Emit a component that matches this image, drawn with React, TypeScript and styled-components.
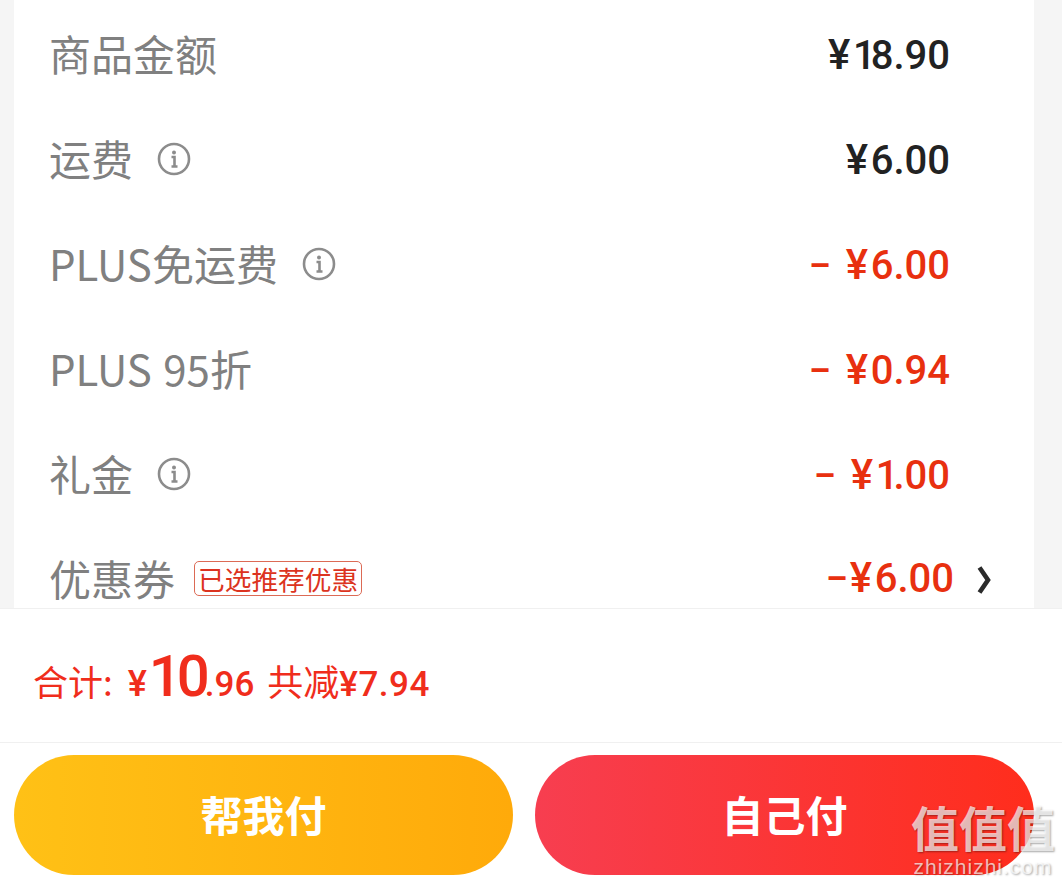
import React from "react";
import styled, { createGlobalStyle } from "styled-components";

const GlobalStyle = createGlobalStyle`
  html, body {
    margin: 0;
    padding: 0;
    background: #ffffff;
    overflow: hidden;
  }
  body {
    font-family: "Roboto", "Noto Sans CJK SC", sans-serif;
  }
`;

const Page = styled.div`
  position: relative;
  width: 1062px;
  height: 881px;
  overflow: hidden;
  background: #ffffff;
`;

const Backdrop = styled.div`
  height: 608px;
  padding: 0 28px 0 14px;
  background: #f5f5f5;
  border-bottom: 1px solid #f0f0f0;
  overflow: hidden;
`;

const Card = styled.div`
  height: 608px;
  background: #ffffff;
  padding: 4px 84px 0 35px;
`;

const Row = styled.div`
  display: flex;
  align-items: center;
  justify-content: space-between;
  height: 105px;
`;

const Label = styled.div`
  display: flex;
  align-items: center;
  margin-top: -8px;
  font-family: "Noto Sans CJK SC", sans-serif;
  font-size: 42px;
  line-height: 50px;
  word-spacing: 2px;
  color: #808080;
  white-space: nowrap;
`;

const InfoIcon = styled.svg`
  width: 34px;
  height: 34px;
  margin-left: 24px;
  margin-top: 2px;
`;

const Amount = styled.div<{ $discount?: boolean }>`
  display: flex;
  align-items: baseline;
  margin-top: -2px;
  font-family: "Roboto", sans-serif;
  font-weight: 500;
  font-size: 40px;
  line-height: 50px;
  white-space: pre;
  color: ${(p) => (p.$discount ? "#e8300f" : "#222222")};
`;

const Minus = styled.span<{ $tight?: boolean }>`
  margin-right: ${(p) => (p.$tight ? "0" : "13px")};
  transform: scaleX(0.85);
`;

const Yen = styled.span`
  width: 25px;
  font-size: 42px;
`;

const NarrowOne = styled.span`
  letter-spacing: -5px;
`;

const CouponTag = styled.span`
  display: inline-block;
  margin-left: 19px;
  margin-top: 2px;
  padding: 0 3px;
  height: 33px;
  border: 1px solid #dc6a55;
  border-radius: 5px;
  font-size: 26.7px;
  line-height: 33px;
  color: #dc3320;
`;

const CouponSide = styled.div`
  display: flex;
  align-items: center;
  margin-top: -4px;
  margin-right: -42px;
`;

const Chevron = styled.svg`
  width: 16px;
  height: 30px;
  margin-left: 22px;
`;

const Summary = styled.div`
  display: flex;
  align-items: baseline;
  height: 134px;
  box-sizing: border-box;
  padding: 37px 0 0 33px;
  border-bottom: 1px solid #f0f0f0;
  color: #f02d1c;
  white-space: pre;
`;

const SummaryLabel = styled.span`
  font-family: "Noto Sans CJK SC", sans-serif;
  font-size: 35px;
`;

const SummaryYen = styled.span`
  font-weight: 500;
  font-size: 36px;
  margin-left: 15px;
`;

const Big = styled.span`
  font-weight: 500;
  font-size: 58px;
  line-height: 60px;
  letter-spacing: -5px;
  margin-left: 2px;
`;

const Cents = styled.span`
  font-weight: 500;
  font-size: 35px;
`;

const Saved = styled.span`
  font-family: "Noto Sans CJK SC", sans-serif;
  font-size: 36px;
  margin-left: 13px;
`;

const SavedValue = styled.span`
  font-family: "Roboto", sans-serif;
  font-weight: 500;
  font-size: 35px;
  letter-spacing: 0.5px;
`;

const Buttons = styled.div`
  display: flex;
  gap: 22px;
  padding: 12px 28px 0 14px;
`;

const PayButton = styled.button<{ $kind: "friend" | "self" }>`
  flex: 1;
  height: 120px;
  padding: 0 0 4px;
  border: 0;
  border-radius: 60px;
  font-family: "Noto Sans CJK SC", sans-serif;
  font-weight: 700;
  font-size: 42px;
  color: #ffffff;
  background: ${(p) =>
    p.$kind === "friend"
      ? "linear-gradient(90deg, #ffc116, #ffaa0a)"
      : "linear-gradient(90deg, #f73e50, #ff2d1c)"};
`;

const Watermark = styled.div`
  position: absolute;
  right: 7px;
  bottom: 2px;
  width: 144px;
  text-align: center;
  color: rgba(255, 255, 255, 0.7);
  text-shadow: 1px 1px 2px rgba(0, 0, 0, 0.35);
`;

const MarkGlyphs = styled.div`
  font-family: "Noto Sans CJK SC", sans-serif;
  font-weight: 700;
  font-size: 48px;
  line-height: 58px;
  white-space: nowrap;
`;

const MarkSite = styled.div`
  font-family: "Liberation Sans", sans-serif;
  font-size: 21px;
  line-height: 24px;
  letter-spacing: 1px;
  white-space: nowrap;
`;

const Info = () => (
  <InfoIcon viewBox="0 0 34 34" fill="none">
    <circle cx="17" cy="17" r="15" stroke="#8c8c8c" strokeWidth="2.6" />
    <circle cx="17" cy="10.5" r="2" fill="#8c8c8c" />
    <path d="M14.5 15h3v9M14.5 24.5h6" stroke="#8c8c8c" strokeWidth="2.6" />
  </InfoIcon>
);

// the "1" in the reference's numerals is narrower than Roboto's tabular one
const Price = ({ digits }: { digits: string }) => (
  <span>
    {digits.startsWith("1") ? (
      <>
        <NarrowOne>1</NarrowOne>
        {digits.slice(1)}
      </>
    ) : (
      digits
    )}
  </span>
);

const rows = [
  { label: "商品金额", digits: "18.90" },
  { label: "运费", digits: "6.00", info: true },
  { label: "PLUS免运费", digits: "6.00", info: true, discount: true },
  { label: "PLUS 95折", digits: "0.94", discount: true },
  { label: "礼金", digits: "1.00", info: true, discount: true },
];

const App = () => (
  <Page>
    <GlobalStyle />
    <Backdrop>
      <Card>
        {rows.map((r) => (
          <Row key={r.label}>
            <Label>
              {r.label}
              {r.info && <Info />}
            </Label>
            <Amount $discount={r.discount}>
              {r.discount && <Minus>–</Minus>}
              <Yen>¥</Yen>
              <Price digits={r.digits} />
            </Amount>
          </Row>
        ))}
        <Row>
          <Label>
            优惠券
            <CouponTag>已选推荐优惠</CouponTag>
          </Label>
          <CouponSide>
            <Amount $discount>
              <Minus $tight>–</Minus>
              <Yen>¥</Yen>
              <Price digits="6.00" />
            </Amount>
            <Chevron viewBox="0 0 16 30" fill="none">
              <path d="M3.5 2.5l8.5 12.5-8.5 12.5" stroke="#2b2b2b" strokeWidth="4.6" />
            </Chevron>
          </CouponSide>
        </Row>
      </Card>
    </Backdrop>
    <Summary>
      <SummaryLabel>合计:</SummaryLabel>
      <SummaryYen>¥</SummaryYen>
      <Big>10</Big>
      <Cents>.96</Cents>
      <Saved>
        共减<SavedValue>¥7.94</SavedValue>
      </Saved>
    </Summary>
    <Buttons>
      <PayButton $kind="friend">帮我付</PayButton>
      <PayButton $kind="self">自己付</PayButton>
    </Buttons>
    <Watermark>
      <MarkGlyphs>值值值</MarkGlyphs>
      <MarkSite>zhizhizhi.com</MarkSite>
    </Watermark>
  </Page>
);

export default App;
